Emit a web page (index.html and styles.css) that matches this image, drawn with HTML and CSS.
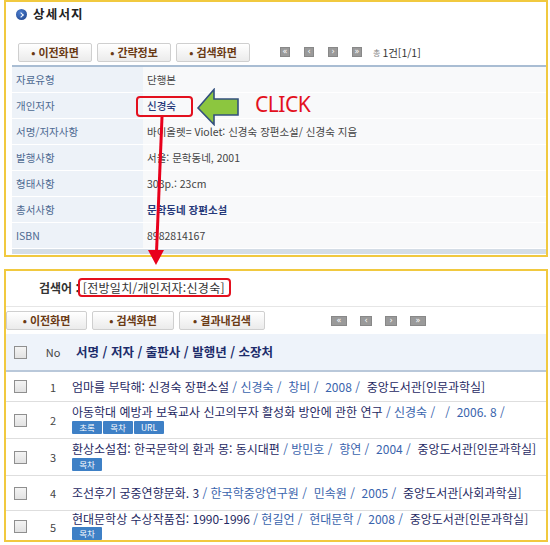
FILE: index.html
```html
<!DOCTYPE html>
<html lang="ko">
<head>
<meta charset="utf-8">
<title>상세서지</title>
<link rel="stylesheet" href="styles.css">
</head>
<body>
<div class="page">
  <section class="panel top">
    <h1 class="title"><span class="title-ico"></span>상세서지</h1>
    <div class="toolbar">
      <div class="btns">
        <span class="btn">• 이전화면</span>
        <span class="btn">• 간략정보</span>
        <span class="btn">• 검색화면</span>
      </div>
      <div class="pager">
        <span class="pg">«</span>
        <span class="pg">‹</span>
        <span class="pg">›</span>
        <span class="pg">»</span>
        <span class="total"><span class="tot-ico">총</span>1건[1/1]</span>
      </div>
    </div>
    <div class="detail">
      <div class="row"><div class="lab">자료유형</div><div class="val">단행본</div></div>
      <div class="row"><div class="lab">개인저자</div><div class="val"><span class="author">신경숙</span></div></div>
      <div class="row"><div class="lab">서명/저자사항</div><div class="val">바이올렛= Violet: 신경숙 장편소설/ 신경숙 지음</div></div>
      <div class="row"><div class="lab">발행사항</div><div class="val">서울: 문학동네, 2001</div></div>
      <div class="row"><div class="lab">형태사항</div><div class="val">303p.: 23cm</div></div>
      <div class="row"><div class="lab">총서사항</div><div class="val"><span class="series">문학동네 장편소설</span></div></div>
      <div class="row"><div class="lab">ISBN</div><div class="val">8982814167</div></div>
    </div>
    <div class="detail-foot"></div>
  </section>

  <section class="panel bottom">
    <div class="query"><b>검색어 :</b> <span class="qtext">[전방일치/개인저자:신경숙]</span></div>
    <div class="toolbar2">
      <div class="btns2">
        <span class="btn">• 이전화면</span>
        <span class="btn">• 검색화면</span>
        <span class="btn">• 결과내검색</span>
      </div>
      <div class="pager2">
        <span class="pg w16">«</span>
        <span class="pg">‹</span>
        <span class="pg">›</span>
        <span class="pg w16">»</span>
      </div>
    </div>
    <div class="list">
      <div class="lrow head">
        <div class="c-chk"><span class="chk"></span></div>
        <div class="c-no">No</div>
        <div class="c-body hd"><div>서명 / 저자 / 출판사 / 발행년 / 소장처</div></div>
      </div>
      <div class="lrow r1">
        <div class="c-chk"><span class="chk"></span></div>
        <div class="c-no">1</div>
        <div class="c-body"><div><span class="t">엄마를 부탁해: 신경숙 장편소설</span><span class="a"> / 신경숙 /&nbsp; 창비 /&nbsp; 2008 /&nbsp; </span><span class="h">중앙도서관[인문과학실]</span></div></div>
      </div>
      <div class="lrow two">
        <div class="c-chk"><span class="chk"></span></div>
        <div class="c-no">2</div>
        <div class="c-body"><div><span class="t">아동학대 예방과 보육교사 신고의무자 활성화 방안에 관한 연구</span><span class="a"> / 신경숙 /&nbsp;&nbsp; /&nbsp; 2006. 8 /</span></div>
          <div class="tags"><span class="tag">초록</span><span class="tag">목차</span><span class="tag">URL</span></div></div>
      </div>
      <div class="lrow two">
        <div class="c-chk"><span class="chk"></span></div>
        <div class="c-no">3</div>
        <div class="c-body"><div><span class="t">환상소설첩: 한국문학의 환과 몽: 동시대편</span><span class="a"> / 방민호 /&nbsp; 향연 /&nbsp; 2004 /&nbsp; </span><span class="h">중앙도서관[인문과학실]</span></div>
          <div class="tags"><span class="tag">목차</span></div></div>
      </div>
      <div class="lrow r4">
        <div class="c-chk"><span class="chk"></span></div>
        <div class="c-no">4</div>
        <div class="c-body"><div><span class="t">조선후기 궁중연향문화. 3</span><span class="a"> / 한국학중앙연구원 /&nbsp; 민속원 /&nbsp; 2005 /&nbsp; </span><span class="h">중앙도서관[사회과학실]</span></div></div>
      </div>
      <div class="lrow two last">
        <div class="c-chk"><span class="chk"></span></div>
        <div class="c-no">5</div>
        <div class="c-body"><div><span class="t">현대문학상 수상작품집: 1990-1996</span><span class="a"> / 현길언 /&nbsp; 현대문학 /&nbsp; 2008 /&nbsp; </span><span class="h">중앙도서관[인문과학실]</span></div>
          <div class="tags"><span class="tag">목차</span></div></div>
      </div>
    </div>
  </section>

  <span class="mark mark-author"></span>
  <span class="mark mark-query"></span>
  <svg class="green-arrow" width="46" height="38" viewBox="0 0 46 38"><polygon points="2,20 18,1.5 18,11 42,11 42,27 18,27 18,36.5" fill="#8cc63f" stroke="#33507e" stroke-width="1.6" stroke-linejoin="miter"/></svg>
  <span class="click">CLICK</span>
  <svg class="red-arrow" width="26" height="152" viewBox="0 0 26 152"><line x1="17" y1="1" x2="11.5" y2="136" stroke="#e8001c" stroke-width="3"/><polygon points="3,134 19,134 11,149" fill="#e8001c"/></svg>
</div>
</body>
</html>
```

FILE: styles.css
```css
* { box-sizing: border-box; }
html, body { margin: 0; padding: 0; background: #fff; }
body { font-family: "Noto Sans CJK KR", "Noto Sans", sans-serif; color: #333; }
.page { position: relative; width: 550px; height: 545px; }

.panel { margin-left: 4px; width: 544px; border: 2px solid #f1c93f; background: #fff; }
.panel.top { height: 257px; padding-left: 6px; }
.panel.bottom { margin-top: 12px; height: 273px; }

.title { margin: 0; height: 40px; padding: 3px 0 0 4px; display: flex; align-items: flex-start; gap: 6px; font-size: 12.5px; font-weight: 700; letter-spacing: 1.2px; color: #222; line-height: 18px; }
.title-ico { position: relative; width: 11px; height: 11px; margin-top: 4px; border-radius: 50%; background: radial-gradient(circle at 40% 35%, #4d7fd0, #1c3f86); }
.title-ico::after { content: ""; position: absolute; left: 3px; top: 3.5px; width: 3px; height: 3px; border-right: 1.5px solid #fff; border-top: 1.5px solid #fff; transform: rotate(45deg); }

.toolbar { display: flex; align-items: center; height: 20px; padding-left: 6px; margin-bottom: 3px; }
.btns, .btns2 { display: flex; gap: 5px; }
.btn { display: inline-flex; align-items: center; justify-content: center; height: 19px; width: 74px; border: 1px solid #cfcfcf; border-radius: 2px; background: linear-gradient(#ffffff, #ebebeb); color: #6a3a14; font-size: 11px; font-weight: 700; line-height: 1; white-space: nowrap; }
.pager { display: flex; align-items: center; gap: 14px; margin-left: 30px; }
.pg { display: inline-flex; align-items: center; justify-content: center; width: 10px; height: 10px; background: #9a9a9a; border: 1px solid #888; color: #fff; font-size: 8px; line-height: 1; font-family: "DejaVu Sans", sans-serif; }
.total { margin-left: -3px; font-size: 10.5px; color: #333; display: inline-flex; align-items: center; gap: 2px; }
.tot-ico { font-size: 8px; color: #888; }

.detail { border-top: 2px solid #a9bdd3; }
.row { display: flex; height: 26px; border-bottom: 1px solid #fff; }
.lab { width: 131px; background: #edf2f8; color: #4d6a92; font-size: 10.5px; line-height: 25px; padding-left: 4px; }
.val { flex: 1; background: #f8f9fa; color: #444; font-size: 10.5px; line-height: 25px; padding-left: 4px; }
.author { color: #273a7a; font-weight: 500; }
.series { color: #273a7a; font-weight: 700; }
.detail-foot { height: 5px; background: #d4dde6; }

.query { height: 35px; padding: 8px 0 0 33px; font-size: 12px; color: #333; line-height: 18px; }
.query b { color: #333; }
.qtext { letter-spacing: 0.3px; }
.toolbar2 { display: flex; align-items: center; border-top: 1px solid #e6e6e6; height: 28px; padding: 4px 0 4px 0; }
.btns2 .btn:nth-child(1) { width: 81px; }
.btns2 .btn:nth-child(2) { width: 82px; }
.btns2 .btn:nth-child(3) { width: 86px; }
.pager2 { display: flex; align-items: center; gap: 13px; margin-left: 66px; }
.pager2 .pg { width: 12px; height: 10px; }
.pager2 .pg.w16 { width: 16px; }

.lrow { display: grid; grid-template-columns: 34px 26px 1fr; border-bottom: 1px solid #dedede; min-height: 30px; }
.lrow.head { background: #eef3fa; height: 38px; border-bottom: 2px solid #b9c8da; }
.lrow.last { border-bottom: none; }
.c-chk { display: flex; align-items: center; padding-left: 8px; }
.chk { width: 13px; height: 13px; border: 1px solid #8f8f8f; background: linear-gradient(#f4f4f4, #e2e2e2); }
.c-no { display: flex; align-items: center; justify-content: center; font-size: 11px; color: #444; }
.c-body { display: flex; flex-direction: column; justify-content: center; padding-left: 6px; font-size: 12px; line-height: 16px; white-space: nowrap; }
.c-body.hd { padding-left: 10px; color: #1d2c6b; font-weight: 700; font-size: 12.5px; }
.lrow.r1 { height: 29px; }
.lrow.two { height: 37px; }
.lrow.two .c-body { justify-content: flex-start; padding-top: 2px; }
.lrow.r4 { height: 35px; }
.lrow.two.last { height: 31px; }
.lrow.two.last .c-body { padding-top: 0; }
.lrow.two.last .tags { margin-top: 0; }
.t { color: #1f2a63; }
.a { color: #3a64ad; }
.h { color: #1f2a63; }
.tags { display: flex; gap: 1px; margin-top: 1px; }
.tag { display: inline-flex; align-items: center; justify-content: center; width: 30px; height: 13px; background: #3e80c6; border-radius: 1px; color: #fff; font-size: 8.5px; line-height: 1; }

.mark { position: absolute; border: 2px solid #e3101e; border-radius: 4px; }
.mark-author { left: 136px; top: 96px; width: 57px; height: 21px; }
.mark-query { left: 78px; top: 278px; width: 153px; height: 19px; }
.green-arrow { position: absolute; left: 196px; top: 88px; }
.click { position: absolute; left: 255px; top: 91px; font-family: "Noto Sans", sans-serif; font-size: 21px; line-height: 26px; color: #e3101e; letter-spacing: -0.5px; }
.red-arrow { position: absolute; left: 145px; top: 116px; }
```
